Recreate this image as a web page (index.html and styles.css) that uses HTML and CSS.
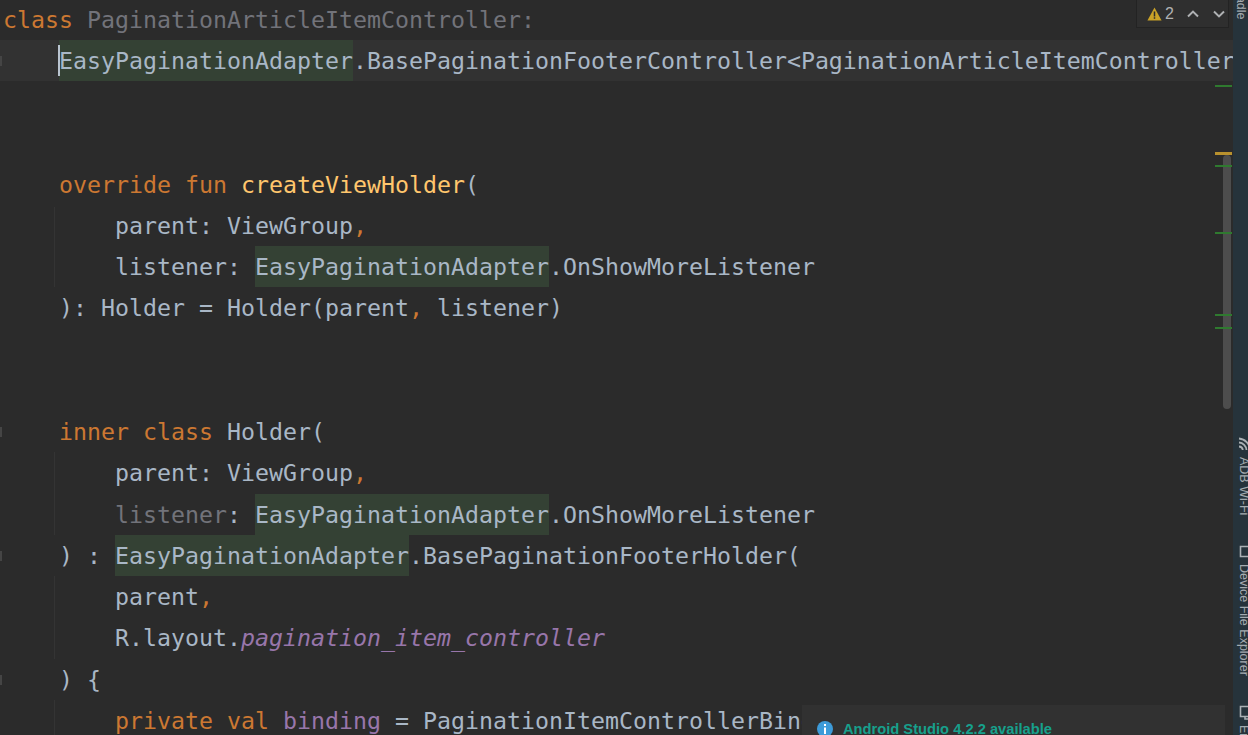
FILE: index.html
```
<!DOCTYPE html>
<html lang="en">
<head>
<meta charset="utf-8">
<title>PaginationArticleItemController</title>
<link rel="stylesheet" href="styles.css">
</head>
<body>
<div class="window">
  <main class="editor">
    <div class="code">
      <div class="line"><span class="kw">class</span> <span class="unused">PaginationArticleItemController</span><span class="unused">:</span></div>
      <div class="line current"><span class="caret"></span>    <span class="hl">EasyPaginationAdapter</span>.BasePaginationFooterController&lt;PaginationArticleItemController&gt;() {</div>
      <div class="line"> </div>
      <div class="line"> </div>
      <div class="line">    <span class="kw">override fun</span> <span class="fn">createViewHolder</span>(</div>
      <div class="line">        parent: ViewGroup<span class="kw">,</span></div>
      <div class="line">        listener: <span class="hl">EasyPaginationAdapter</span>.OnShowMoreListener</div>
      <div class="line">    ): Holder = Holder(parent<span class="kw">,</span> listener)</div>
      <div class="line"> </div>
      <div class="line"> </div>
      <div class="line">    <span class="kw">inner class</span> Holder(</div>
      <div class="line">        parent: ViewGroup<span class="kw">,</span></div>
      <div class="line">        <span class="unused">listener</span>: <span class="hl">EasyPaginationAdapter</span>.OnShowMoreListener</div>
      <div class="line">    ) : <span class="hl">EasyPaginationAdapter</span>.BasePaginationFooterHolder(</div>
      <div class="line">        parent<span class="kw">,</span></div>
      <div class="line">        R.layout.<span class="res">pagination_item_controller</span></div>
      <div class="line">    ) {</div>
      <div class="line">        <span class="kw">private val</span> <span class="prop">binding</span> = PaginationItemControllerBinding.bind(itemView)</div>
    </div>

    <span class="guide guide-a"></span>
    <span class="guide guide-b"></span>
    <span class="guide guide-c"></span>
    <span class="guide guide-d"></span>

    <span class="fold fold-a"></span>
    <span class="fold fold-b"></span>
    <span class="fold fold-c"></span>
    <span class="fold fold-d"></span>

    <div class="inspections">
      <svg class="warn" viewBox="0 0 16 15" width="15" height="14"><path d="M8 .6 15.6 14.4H.4Z" fill="#c9a227"/><path d="M7.2 4.8h1.6v5.4H7.2zM7.2 11h1.6v1.7H7.2z" fill="#2b2b2b"/></svg>
      <span class="count">2</span>
      <svg class="chev" viewBox="0 0 12 8" width="12" height="8"><path d="M1 6.5 6 1.6l5 4.9" fill="none" stroke="#afb1b3" stroke-width="2"/></svg>
      <svg class="chev" viewBox="0 0 12 8" width="12" height="8"><path d="M1 1.5 6 6.4l5-4.9" fill="none" stroke="#afb1b3" stroke-width="2"/></svg>
    </div>

    <span class="thumb"></span>
    <span class="mark green m1"></span>
    <span class="mark amber m2"></span>
    <span class="mark green m3"></span>
    <span class="mark green m4"></span>
    <span class="mark green m5"></span>
    <span class="mark green m6"></span>

    <div class="balloon">
      <svg class="info" viewBox="0 0 16 16" width="16" height="16"><circle cx="8" cy="8" r="8" fill="#3d9bd9"/><path d="M7 3h2v2H7zM7 6.4h2V13H7z" fill="#fff"/></svg>
      <span class="balloon-title">Android Studio 4.2.2 available</span>
    </div>
  </main>

  <aside class="strip">
    <span class="tool-top">Gradle</span>
    <div class="tool tool-adb">
      <svg viewBox="0 0 15 15" width="15" height="15"><path d="M2 1.5a12 12 0 0 1 11 11.5M2 5.5a8 8 0 0 1 7.5 7.5M2 9.5A4 4 0 0 1 5.8 13" fill="none" stroke="#aab0b4" stroke-width="1.8"/></svg>
      <span>ADB Wi-Fi</span>
    </div>
    <div class="tool tool-dfe">
      <svg viewBox="0 0 15 15" width="15" height="15"><path d="M14 2.5H3.5v10H14" fill="none" stroke="#aab0b4" stroke-width="1.6"/></svg>
      <span>Device File Explorer</span>
    </div>
    <div class="tool tool-em">
      <svg viewBox="0 0 15 15" width="15" height="15"><path d="M14 1.5H3.5v10H14M8 11.5v2.5h6" fill="none" stroke="#aab0b4" stroke-width="1.6"/></svg>
      <span>Emulator</span>
    </div>
  </aside>
</div>
</body>
</html>
```

FILE: styles.css
```
* { box-sizing: border-box; }

html, body {
  margin: 0;
  height: 100%;
  overflow: hidden;
  background: #2b2b2b;
}

.window {
  display: flex;
  width: 1248px;
  height: 735px;
  overflow: hidden;
}

.editor {
  position: relative;
  flex: 0 0 1233px;
  height: 735px;
  overflow: hidden;
  background: #2b2b2b;
}

.code {
  margin-top: -1.4px;
  font-family: "DejaVu Sans Mono", "Liberation Mono", monospace;
  font-size: 23.25px;
  color: #a9b7c6;
}

.line {
  height: 41.25px;
  line-height: 41.25px;
  padding-left: 3px;
  white-space: pre;
  overflow: hidden;
}

.current { background: #323232; position: relative; }

.caret {
  position: absolute;
  left: 58px;
  top: 5px;
  width: 2px;
  height: 31px;
  background: #b9c4d0;
}

.kw { color: #cc7832; }
.fn { color: #ffc66d; }
.prop { color: #9876aa; }
.res { color: #9876aa; font-style: italic; }
.unused { color: #72737a; }

.hl {
  display: inline-block;
  height: 41.25px;
  background: #344134;
}

.guide {
  position: absolute;
  left: 54px;
  width: 1px;
  background: #343434;
}
.guide-a { top: 207px; height: 80px; }
.guide-b { top: 452px; height: 83px; }
.guide-c { top: 576px; height: 83px; }
.guide-d { top: 700px; height: 35px; }

.fold {
  position: absolute;
  left: 0;
  width: 2px;
  height: 10px;
  background: #454545;
}
.fold-a { top: 56px; }
.fold-b { top: 427px; }
.fold-c { top: 551px; }
.fold-d { top: 675px; }

.inspections {
  position: absolute;
  top: 0;
  left: 1136px;
  width: 93px;
  height: 28px;
  display: flex;
  align-items: center;
  padding-left: 10px;
  background: #2f2f2f;
  border: 1px solid #232323;
  border-top: 0;
  font-family: "Liberation Sans", sans-serif;
  font-size: 16px;
  color: #afb1b3;
}
.warn { flex: none; }
.count { flex: none; margin-left: 3px; width: 22px; }
.chev { flex: none; margin-right: 14px; }
.chev:last-child { margin-right: 0; }

.thumb {
  position: absolute;
  left: 1223px;
  top: 155px;
  width: 8px;
  height: 254px;
  border-radius: 4px;
  background: #4d4d4d;
}

.mark {
  position: absolute;
  left: 1215px;
  width: 17px;
  height: 2px;
}
.green { background: #2f7a2f; }
.amber { background: #b8912e; height: 3px; }
.m1 { top: 85px; }
.m2 { top: 152px; }
.m3 { top: 165px; }
.m4 { top: 232px; }
.m5 { top: 314px; }
.m6 { top: 327px; }

.balloon {
  position: absolute;
  left: 802px;
  top: 705px;
  width: 423px;
  height: 30px;
  display: flex;
  align-items: flex-start;
  gap: 10px;
  padding: 16px 0 0 15px;
  background: #313131;
  font-family: "Liberation Sans", sans-serif;
  font-size: 14.7px;
  font-weight: 700;
  line-height: 17px;
  color: #17a08c;
}
.info { flex: none; }

.strip {
  flex: 0 0 15px;
  height: 735px;
  display: flex;
  flex-direction: column;
  background: #26333b;
  overflow: hidden;
  font-family: "Liberation Sans", sans-serif;
  font-size: 12.5px;
  color: #a4abb0;
}

.tool {
  display: flex;
  flex-direction: column;
  align-items: center;
  gap: 5px;
  margin-left: 3px;
  width: 16px;
  flex: none;
  line-height: 14px;
}
.tool svg { flex: none; }
.tool span { writing-mode: vertical-rl; white-space: nowrap; }

.tool-top {
  writing-mode: vertical-rl;
  white-space: nowrap;
  height: 20px;
  margin-left: 4px;
  flex: none;
  direction: rtl;
  line-height: 14px;
}
.tool-adb { margin-top: 417px; }
.tool-dfe { margin-top: 29px; }
.tool-em { margin-top: 29px; }
```
